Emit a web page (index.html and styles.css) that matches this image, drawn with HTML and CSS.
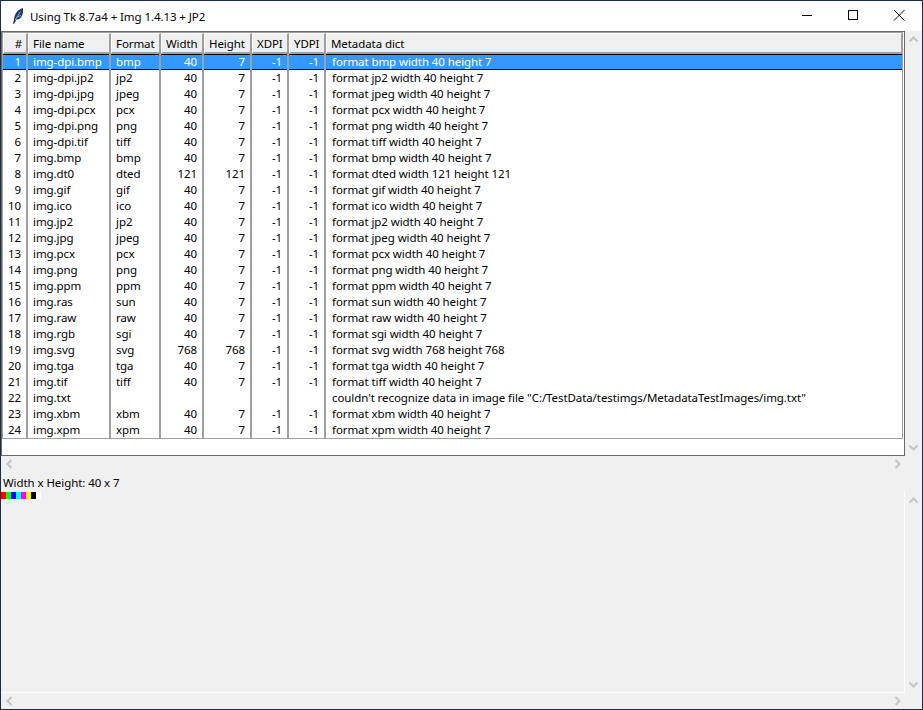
FILE: index.html
```html
<!DOCTYPE html>
<html lang="en">
<head>
<meta charset="UTF-8">
<title>Using Tk 8.7a4 + Img 1.4.13 + JP2</title>
<link rel="stylesheet" href="styles.css">
</head>

<body>

<div class="window">

  <div class="titlebar">
    <svg class="feather" width="12" height="16" viewBox="0 0 12 16">
      <path d="M1 16 L2 11 C2.5 6 5.5 1.5 11 0 C11.5 4 10.5 9 7.5 11 L4.5 11.5 L2.2 15.8 Z" fill="#1f3a66"/>
      <path d="M3.2 12 L8.5 3.5 M5 9 L9 7.5" stroke="#8fb0d8" stroke-width="1" fill="none"/>
    </svg>
    <span class="title">Using Tk 8.7a4 + Img 1.4.13 + JP2</span>
    <div class="caption">
      <svg class="cap-btn" width="46" height="30" viewBox="0 0 46 30"><path d="M18 14.5 H28" stroke="#000" fill="none"/></svg>
      <svg class="cap-btn" width="46" height="30" viewBox="0 0 46 30"><rect x="18.5" y="9.5" width="9" height="9" stroke="#000" fill="none"/></svg>
      <svg class="cap-btn" width="46" height="30" viewBox="0 0 46 30"><path d="M18 9 L28.5 19.5 M28.5 9 L18 19.5" stroke="#000" fill="none"/></svg>
    </div>
  </div>

  <div class="table-row">
    <div class="frame">
      <table class="files">
        <thead>
          <tr>
            <th class="c-num num">#</th>
            <th class="c-name">File name</th>
            <th class="c-format">Format</th>
            <th class="c-width">Width</th>
            <th class="c-height">Height</th>
            <th class="c-xdpi">XDPI</th>
            <th class="c-ydpi">YDPI</th>
            <th class="c-meta">Metadata dict</th>
          </tr>
        </thead>
        <tbody>
          <tr class="selected"><td class="num">1</td><td>img-dpi.bmp</td><td>bmp</td><td class="num">40</td><td class="num">7</td><td class="num">-1</td><td class="num">-1</td><td>format bmp width 40 height 7</td></tr>
          <tr><td class="num">2</td><td>img-dpi.jp2</td><td>jp2</td><td class="num">40</td><td class="num">7</td><td class="num">-1</td><td class="num">-1</td><td>format jp2 width 40 height 7</td></tr>
          <tr><td class="num">3</td><td>img-dpi.jpg</td><td>jpeg</td><td class="num">40</td><td class="num">7</td><td class="num">-1</td><td class="num">-1</td><td>format jpeg width 40 height 7</td></tr>
          <tr><td class="num">4</td><td>img-dpi.pcx</td><td>pcx</td><td class="num">40</td><td class="num">7</td><td class="num">-1</td><td class="num">-1</td><td>format pcx width 40 height 7</td></tr>
          <tr><td class="num">5</td><td>img-dpi.png</td><td>png</td><td class="num">40</td><td class="num">7</td><td class="num">-1</td><td class="num">-1</td><td>format png width 40 height 7</td></tr>
          <tr><td class="num">6</td><td>img-dpi.tif</td><td>tiff</td><td class="num">40</td><td class="num">7</td><td class="num">-1</td><td class="num">-1</td><td>format tiff width 40 height 7</td></tr>
          <tr><td class="num">7</td><td>img.bmp</td><td>bmp</td><td class="num">40</td><td class="num">7</td><td class="num">-1</td><td class="num">-1</td><td>format bmp width 40 height 7</td></tr>
          <tr><td class="num">8</td><td>img.dt0</td><td>dted</td><td class="num">121</td><td class="num">121</td><td class="num">-1</td><td class="num">-1</td><td>format dted width 121 height 121</td></tr>
          <tr><td class="num">9</td><td>img.gif</td><td>gif</td><td class="num">40</td><td class="num">7</td><td class="num">-1</td><td class="num">-1</td><td>format gif width 40 height 7</td></tr>
          <tr><td class="num">10</td><td>img.ico</td><td>ico</td><td class="num">40</td><td class="num">7</td><td class="num">-1</td><td class="num">-1</td><td>format ico width 40 height 7</td></tr>
          <tr><td class="num">11</td><td>img.jp2</td><td>jp2</td><td class="num">40</td><td class="num">7</td><td class="num">-1</td><td class="num">-1</td><td>format jp2 width 40 height 7</td></tr>
          <tr><td class="num">12</td><td>img.jpg</td><td>jpeg</td><td class="num">40</td><td class="num">7</td><td class="num">-1</td><td class="num">-1</td><td>format jpeg width 40 height 7</td></tr>
          <tr><td class="num">13</td><td>img.pcx</td><td>pcx</td><td class="num">40</td><td class="num">7</td><td class="num">-1</td><td class="num">-1</td><td>format pcx width 40 height 7</td></tr>
          <tr><td class="num">14</td><td>img.png</td><td>png</td><td class="num">40</td><td class="num">7</td><td class="num">-1</td><td class="num">-1</td><td>format png width 40 height 7</td></tr>
          <tr><td class="num">15</td><td>img.ppm</td><td>ppm</td><td class="num">40</td><td class="num">7</td><td class="num">-1</td><td class="num">-1</td><td>format ppm width 40 height 7</td></tr>
          <tr><td class="num">16</td><td>img.ras</td><td>sun</td><td class="num">40</td><td class="num">7</td><td class="num">-1</td><td class="num">-1</td><td>format sun width 40 height 7</td></tr>
          <tr><td class="num">17</td><td>img.raw</td><td>raw</td><td class="num">40</td><td class="num">7</td><td class="num">-1</td><td class="num">-1</td><td>format raw width 40 height 7</td></tr>
          <tr><td class="num">18</td><td>img.rgb</td><td>sgi</td><td class="num">40</td><td class="num">7</td><td class="num">-1</td><td class="num">-1</td><td>format sgi width 40 height 7</td></tr>
          <tr><td class="num">19</td><td>img.svg</td><td>svg</td><td class="num">768</td><td class="num">768</td><td class="num">-1</td><td class="num">-1</td><td>format svg width 768 height 768</td></tr>
          <tr><td class="num">20</td><td>img.tga</td><td>tga</td><td class="num">40</td><td class="num">7</td><td class="num">-1</td><td class="num">-1</td><td>format tga width 40 height 7</td></tr>
          <tr><td class="num">21</td><td>img.tif</td><td>tiff</td><td class="num">40</td><td class="num">7</td><td class="num">-1</td><td class="num">-1</td><td>format tiff width 40 height 7</td></tr>
          <tr><td class="num">22</td><td>img.txt</td><td></td><td></td><td></td><td></td><td></td><td>couldn't recognize data in image file "C:/TestData/testimgs/MetadataTestImages/img.txt"</td></tr>
          <tr><td class="num">23</td><td>img.xbm</td><td>xbm</td><td class="num">40</td><td class="num">7</td><td class="num">-1</td><td class="num">-1</td><td>format xbm width 40 height 7</td></tr>
          <tr><td class="num">24</td><td>img.xpm</td><td>xpm</td><td class="num">40</td><td class="num">7</td><td class="num">-1</td><td class="num">-1</td><td>format xpm width 40 height 7</td></tr>
        </tbody>
      </table>
    </div>
    <div class="vscroll">
      <svg width="17" height="17" viewBox="0 0 17 17"><path d="M4.5 10.5 L8.5 6.5 L12.5 10.5" class="chev"/></svg>
      <svg width="17" height="17" viewBox="0 0 17 17"><path d="M4.5 6.5 L8.5 10.5 L12.5 6.5" class="chev"/></svg>
    </div>
  </div>

  <div class="hscroll">
    <svg width="17" height="16" viewBox="0 0 17 16"><path d="M10.5 4 L6.5 8 L10.5 12" class="chev"/></svg>
    <svg width="17" height="16" viewBox="0 0 17 16"><path d="M6.5 4 L10.5 8 L6.5 12" class="chev"/></svg>
  </div>

  <div class="size-label">Width x Height: 40 x 7</div>

  <div class="preview-row">
    <div class="preview">
      <div class="strip">
        <span class="px red"></span><span class="px green"></span><span class="px blue"></span><span class="px cyan"></span>
        <span class="px magenta"></span><span class="px yellow"></span><span class="px black"></span><span class="px white"></span>
      </div>
    </div>
    <div class="vscroll">
      <svg width="17" height="17" viewBox="0 0 17 17"><path d="M4.5 10.5 L8.5 6.5 L12.5 10.5" class="chev"/></svg>
      <svg width="17" height="17" viewBox="0 0 17 17"><path d="M4.5 6.5 L8.5 10.5 L12.5 6.5" class="chev"/></svg>
    </div>
  </div>

  <div class="hscroll">
    <svg width="17" height="16" viewBox="0 0 17 16"><path d="M10.5 4 L6.5 8 L10.5 12" class="chev"/></svg>
    <svg width="17" height="16" viewBox="0 0 17 16"><path d="M6.5 4 L10.5 8 L6.5 12" class="chev"/></svg>
  </div>

</div>

</body>
</html>
```

FILE: styles.css
```css
*{box-sizing:border-box}
html,body{height:100%}
body{
  margin:0;
  padding:1px;
  background:#1b2c45;
  font-family:"Noto Sans", "Open Sans", sans-serif;
  font-size:11.5px;
  letter-spacing:-.08px;
  color:#000;
  overflow:hidden;
}

.window{
  width:921px;
  height:708px;
  background:#f0f0f0;
  display:flex;
  flex-direction:column;
}

/* TITLE BAR */
.titlebar{
  height:30px;
  flex:none;
  background:#fff;
  display:flex;
  align-items:center;
  padding-left:11px;
}
.feather{margin-top:-1px}
.title{margin-left:6px;margin-top:1px}
.caption{margin-left:auto;display:flex}
.cap-btn{display:block}

/* TABLE */
.table-row{
  display:flex;
  height:425px;
  flex:none;
}
.frame{
  width:904px;
  background:#fff;
  border:1px solid #696969;
}
.files{
  width:901px;
  table-layout:fixed;
  border-collapse:separate;
  border-spacing:0;
  border:1px solid #a0a0a0;
}
.files th{
  height:21px;
  padding:2px 4px 0;
  font-weight:400;
  text-align:left;
  line-height:16px;
  background:#f0f0f0;
  border-top:1px solid #fff;
  border-left:1px solid #fff;
  border-right:2px solid #a0a0a0;
  border-bottom:2px solid #a0a0a0;
  white-space:nowrap;
  overflow:hidden;
}
.files th:last-child{border-right:1px solid #a0a0a0}
.files td{
  height:16px;
  padding:0 5px;
  line-height:16px;
  border-right:2px solid #a0a0a0;
  white-space:nowrap;
}
.files td:last-child{border-right:none;padding-left:6px}
.files td.num{text-align:right}
.files th.num{text-align:right}

.c-num{width:25px}
.c-name{width:83px}
.c-format{width:50px}
.c-width{width:43px}
.c-height{width:48px}
.c-xdpi{width:37px}
.c-ydpi{width:37px}

.selected td{
  background:#3399ff;
  color:#fff;
  box-shadow:inset 0 1px #000, inset 0 -1px #000;
}

/* SCROLLBARS */
.vscroll{
  width:17px;
  flex:none;
  display:flex;
  flex-direction:column;
  justify-content:space-between;
}
.hscroll{
  height:16px;
  flex:none;
  display:flex;
  justify-content:space-between;
  padding-right:16px;
}
.vscroll svg,.hscroll svg{display:block}
.chev{fill:none;stroke:#c4c4c4;stroke-width:2}

/* PREVIEW */
.size-label{
  height:20px;
  flex:none;
  padding:3px 0 0 2px;
  line-height:16px;
}
.preview-row{
  flex:1;
  display:flex;
  min-height:0;
}
.preview{
  flex:1;
  border-right:1px solid #fff;
  border-bottom:1px solid #fff;
}
.strip{display:flex}
.px{width:5px;height:7px}
.red{background:#f00}
.green{background:#0f0}
.blue{background:#00f}
.cyan{background:#0ff}
.magenta{background:#f0f}
.yellow{background:#ff0}
.black{background:#000}
.white{background:#fff}
```
